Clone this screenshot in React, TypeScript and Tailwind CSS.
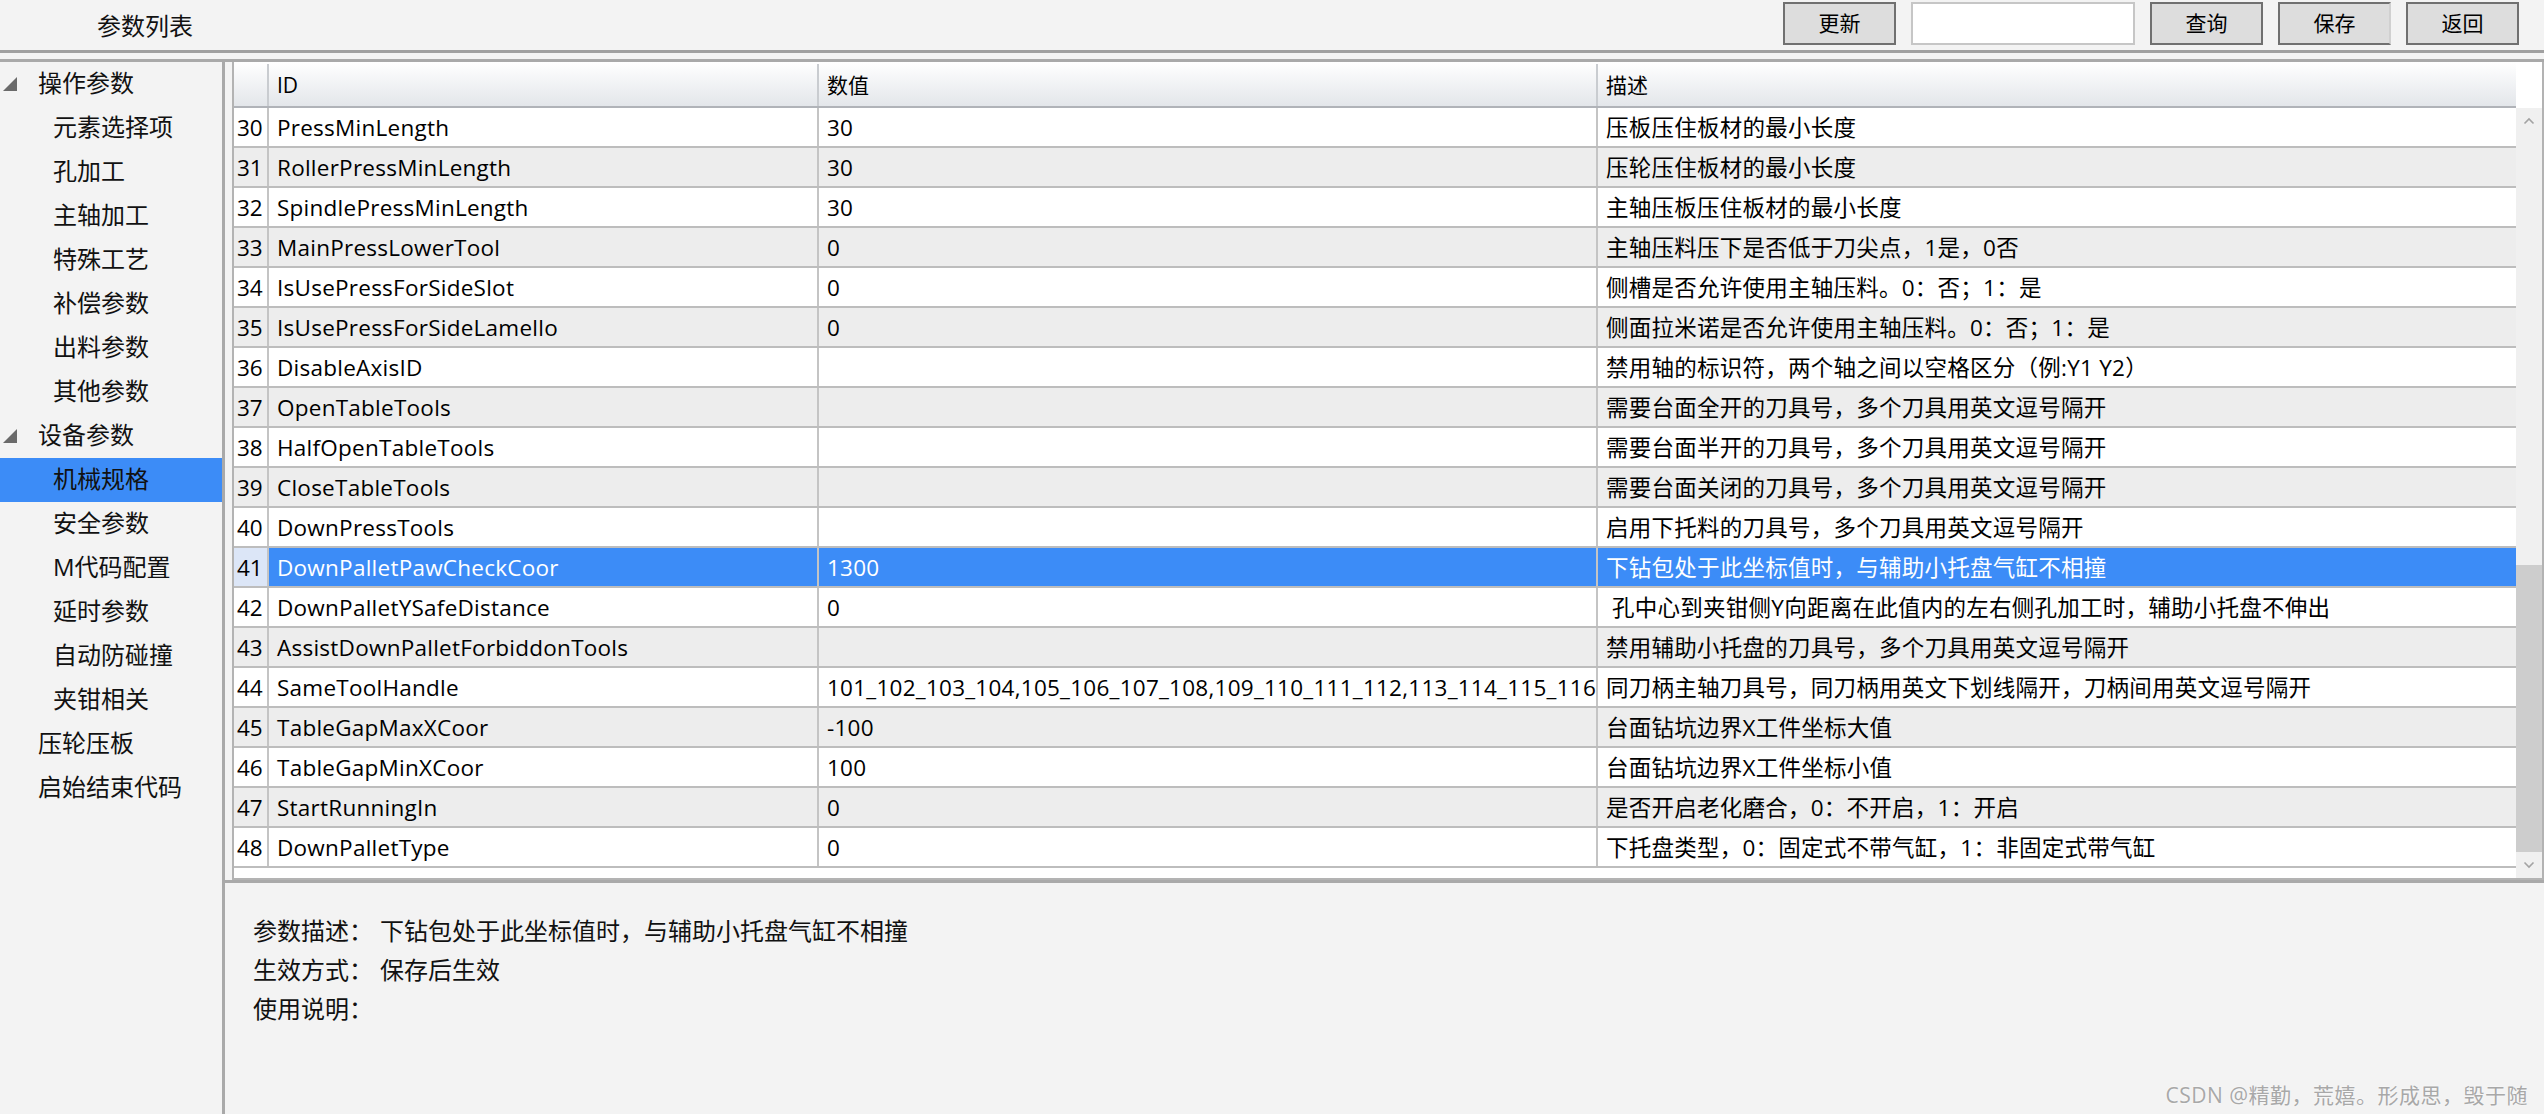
import React from 'react';
import clsx from 'clsx';

type Row = { no: number; id: string; value: string; desc: string };

const ROWS: Row[] = [
  { no: 30, id: 'PressMinLength', value: '30', desc: '压板压住板材的最小长度' },
  { no: 31, id: 'RollerPressMinLength', value: '30', desc: '压轮压住板材的最小长度' },
  { no: 32, id: 'SpindlePressMinLength', value: '30', desc: '主轴压板压住板材的最小长度' },
  { no: 33, id: 'MainPressLowerTool', value: '0', desc: '主轴压料压下是否低于刀尖点，1是，0否' },
  { no: 34, id: 'IsUsePressForSideSlot', value: '0', desc: '侧槽是否允许使用主轴压料。0：否；1：是' },
  { no: 35, id: 'IsUsePressForSideLamello', value: '0', desc: '侧面拉米诺是否允许使用主轴压料。0：否；1：是' },
  { no: 36, id: 'DisableAxisID', value: '', desc: '禁用轴的标识符，两个轴之间以空格区分（例:Y1 Y2）' },
  { no: 37, id: 'OpenTableTools', value: '', desc: '需要台面全开的刀具号，多个刀具用英文逗号隔开' },
  { no: 38, id: 'HalfOpenTableTools', value: '', desc: '需要台面半开的刀具号，多个刀具用英文逗号隔开' },
  { no: 39, id: 'CloseTableTools', value: '', desc: '需要台面关闭的刀具号，多个刀具用英文逗号隔开' },
  { no: 40, id: 'DownPressTools', value: '', desc: '启用下托料的刀具号，多个刀具用英文逗号隔开' },
  { no: 41, id: 'DownPalletPawCheckCoor', value: '1300', desc: '下钻包处于此坐标值时，与辅助小托盘气缸不相撞' },
  { no: 42, id: 'DownPalletYSafeDistance', value: '0', desc: ' 孔中心到夹钳侧Y向距离在此值内的左右侧孔加工时，辅助小托盘不伸出' },
  { no: 43, id: 'AssistDownPalletForbiddonTools', value: '', desc: '禁用辅助小托盘的刀具号，多个刀具用英文逗号隔开' },
  {
    no: 44,
    id: 'SameToolHandle',
    value: '101_102_103_104,105_106_107_108,109_110_111_112,113_114_115_116',
    desc: '同刀柄主轴刀具号，同刀柄用英文下划线隔开，刀柄间用英文逗号隔开',
  },
  { no: 45, id: 'TableGapMaxXCoor', value: '-100', desc: '台面钻坑边界X工件坐标大值' },
  { no: 46, id: 'TableGapMinXCoor', value: '100', desc: '台面钻坑边界X工件坐标小值' },
  { no: 47, id: 'StartRunningIn', value: '0', desc: '是否开启老化磨合，0：不开启，1：开启' },
  { no: 48, id: 'DownPalletType', value: '0', desc: '下托盘类型，0：固定式不带气缸，1：非固定式带气缸' },
];

const SELECTED = 41;

const TREE = [
  { label: '操作参数', level: 0, arrow: true },
  { label: '元素选择项', level: 1 },
  { label: '孔加工', level: 1 },
  { label: '主轴加工', level: 1 },
  { label: '特殊工艺', level: 1 },
  { label: '补偿参数', level: 1 },
  { label: '出料参数', level: 1 },
  { label: '其他参数', level: 1 },
  { label: '设备参数', level: 0, arrow: true },
  { label: '机械规格', level: 1, selected: true },
  { label: '安全参数', level: 1 },
  { label: 'M代码配置', level: 1 },
  { label: '延时参数', level: 1 },
  { label: '自动防碰撞', level: 1 },
  { label: '夹钳相关', level: 1 },
  { label: '压轮压板', level: 0 },
  { label: '启始结束代码', level: 0 },
];

function ToolButton({ label, noRight }: { label: string; noRight?: boolean }) {
  return (
    <button
      className={clsx(
        'flex h-[43px] w-[113px] items-center justify-center border-2 border-[#707070] bg-[#dddddd] text-[21px] leading-none text-black',
        noRight && 'border-r-[#d0d0d0]',
      )}
    >
      {label}
    </button>
  );
}

function Sidebar() {
  return (
    <div className="w-[225px] shrink-0 border-r-[3px] border-[#a9a9a9] bg-[#f3f3f3]">
      {TREE.map((item) => (
        <div
          key={item.label}
          className={clsx(
            'flex h-[44px] items-center text-[24px] leading-none text-[#111]',
            item.selected && 'bg-[#3c8cf7]',
          )}
        >
          {item.level === 0 ? (
            <span className="flex w-[38px] items-center pl-[2px]">
              {item.arrow && (
                <svg width="16" height="16" viewBox="0 0 16 16">
                  <polygon points="1,15 15,15 15,1" fill="#6a6a6a" />
                </svg>
              )}
            </span>
          ) : (
            <span className="w-[53px]" />
          )}
          <span className="-mt-[2px]">{item.label}</span>
        </div>
      ))}
    </div>
  );
}

function ParamTable() {
  return (
    <div className="flex h-[821px] border-b-[3px] border-[#a9a9a9]">
      <div className="w-[7px] bg-[#f3f3f3]" />
      <div className="flex flex-1 flex-col border-b-2 border-l-2 border-r-2 border-[#b3b3b3] bg-white">
        {/* header */}
        <div className="flex h-[46px]">
          <div className="flex flex-1 border-b-2 border-[#b0b3b8] bg-linear-to-b from-[#ffffff] to-[#e3e6ea] pt-[2px] text-[21px] leading-none text-black">
            <div className="w-[35px] border-r-2 border-[#c9ccd0]" />
            <div className="flex w-[550px] items-center border-r-2 border-[#c9ccd0] pl-[8px]">ID</div>
            <div className="flex w-[779px] items-center border-r-2 border-[#c9ccd0] pl-[8px]">数值</div>
            <div className="flex flex-1 items-center pl-[8px]">描述</div>
          </div>
          <div className="w-[26px] bg-white" />
        </div>
        {/* body */}
        <div className="flex flex-1">
          <div className="flex-1 overflow-hidden">
            {ROWS.map((r) => {
              const sel = r.no === SELECTED;
              const alt = r.no % 2 === 1;
              return (
                <div
                  key={r.no}
                  className={clsx(
                    'flex h-[40px] border-b-2 border-[#bdbdbd] text-[22.5px] leading-none tracking-[0.25px] whitespace-pre',
                    alt ? 'bg-[#ededed]' : 'bg-white',
                  )}
                >
                  <div
                    className={clsx(
                      'flex w-[35px] items-center border-r-2 border-[#c4c4c4] pl-[3px] pt-[3px] tracking-normal text-black',
                      sel && 'bg-[#dce6f7]',
                    )}
                  >
                    {r.no}
                  </div>
                  <div
                    className={clsx(
                      'flex w-[550px] items-center overflow-hidden border-r-2 border-[#c4c4c4] pl-[8px] pt-[3px]',
                      sel ? 'bg-[#3c8cf7] text-white' : 'text-black',
                    )}
                  >
                    {r.id}
                  </div>
                  <div
                    className={clsx(
                      'flex w-[779px] items-center overflow-hidden border-r-2 border-[#c4c4c4] pl-[8px] pt-[3px]',
                      sel ? 'bg-[#3c8cf7] text-white' : 'text-black',
                    )}
                  >
                    {r.value}
                  </div>
                  <div
                    className={clsx(
                      'flex flex-1 items-center overflow-hidden pl-[8px] pt-[3px]',
                      sel ? 'bg-[#3c8cf7] text-white' : 'text-black',
                    )}
                  >
                    {r.desc}
                  </div>
                </div>
              );
            })}
          </div>
          {/* scrollbar */}
          <div className="flex w-[26px] flex-col bg-[#f0f0f0]">
            <div className="flex h-[26px] items-center justify-center">
              <svg width="12" height="8" viewBox="0 0 12 8">
                <polyline points="1.5,6.5 6,2 10.5,6.5" fill="none" stroke="#a3a3a3" strokeWidth="1.6" />
              </svg>
            </div>
            <div className="flex flex-1 flex-col justify-end">
              <div className="h-[287px] bg-[#cdcdcd]" />
            </div>
            <div className="flex h-[26px] items-center justify-center">
              <svg width="12" height="8" viewBox="0 0 12 8">
                <polyline points="1.5,1.5 6,6 10.5,1.5" fill="none" stroke="#a3a3a3" strokeWidth="1.6" />
              </svg>
            </div>
          </div>
        </div>
      </div>
    </div>
  );
}

function DescPanel() {
  const lines: [string, string][] = [
    ['参数描述：', '下钻包处于此坐标值时，与辅助小托盘气缸不相撞'],
    ['生效方式：', '保存后生效'],
    ['使用说明：', ''],
  ];
  return (
    <div className="flex-1 pl-[28px] pt-[28px] text-[24px] leading-[39px] text-[#111]">
      {lines.map(([label, value]) => (
        <div key={label} className="flex">
          <span className="w-[127px]">{label}</span>
          <span>{value}</span>
        </div>
      ))}
    </div>
  );
}

export default function App() {
  return (
    <div className="relative flex h-[1114px] w-[2544px] flex-col overflow-hidden bg-[#f3f3f3] font-[family-name:'Open_Sans','Noto_Sans_CJK_SC',sans-serif]">
      {/* top bar */}
      <div className="flex h-[53px] shrink-0 items-start border-b-[3px] border-[#a0a0a0] pr-[25px]">
        <div className="flex h-[50px] items-center pl-[97px] pt-[2px] text-[24px] leading-none text-[#111]">参数列表</div>
        <div className="ml-auto flex items-center gap-[15px] pt-[2px]">
          <ToolButton label="更新" />
          <div className="h-[43px] w-[224px] border-2 border-[#c6c6c6] bg-white" />
          <ToolButton label="查询" />
          <ToolButton label="保存" noRight />
          <ToolButton label="返回" />
        </div>
      </div>

      {/* main */}
      <div className="mt-[6px] flex flex-1 border-t-[3px] border-[#a9a9a9]">
        <Sidebar />
        <div className="flex flex-1 flex-col">
          <ParamTable />
          <DescPanel />
        </div>
      </div>

      <div className="absolute bottom-[7px] right-[16px] text-[21px] leading-[24px] tracking-[0.5px] text-[#a8a8a8] [text-shadow:0_0_2px_#ffffff]">
        CSDN @精勤，荒嬉。形成思，毁于随
      </div>
    </div>
  );
}
